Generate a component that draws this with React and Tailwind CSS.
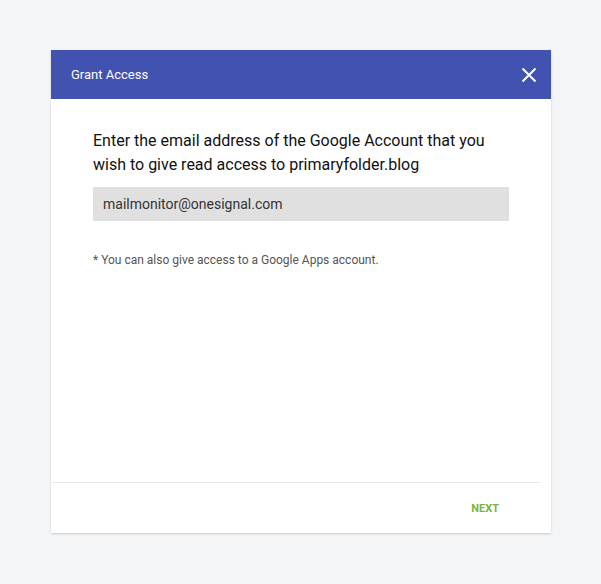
import React from 'react';

export default function App() {
  return (
    <div className="min-h-[584px] bg-[#f4f5f7] pt-[50px] pl-[51px]" style={{ fontFamily: 'Roboto, "Liberation Sans", sans-serif' }}>
      <div className="w-[500px] bg-white shadow-[0_1px_2px_rgba(0,0,0,0.18)] flex flex-col">
        <div className="h-[49px] bg-[#4152b1] flex items-center justify-between pl-[20px] pr-[14px]">
          <span className="text-white text-[13px]">Grant Access</span>
          <svg width="16" height="16" viewBox="0 0 16 16" className="text-white">
            <path d="M1.5 1.5L14.5 14.5M14.5 1.5L1.5 14.5" stroke="currentColor" strokeWidth="2" />
          </svg>
        </div>
        <div className="h-[383px] px-[42px] pt-[30px]">
          <p className="w-[416px] text-[16px] leading-[24px] text-[#111]">
            Enter the email address of the Google Account that you wish to give read access to primaryfolder.blog
          </p>
          <div className="mt-[10px] h-[34px] w-[416px] bg-[#e0e0e0] flex items-center px-[10px] text-[14px] text-[#333]">
            mailmonitor@onesignal.com
          </div>
          <p className="mt-[31px] text-[12px] leading-[16px] text-[#555]">
            * You can also give access to a Google Apps account.
          </p>
        </div>
        <div className="h-px bg-[#e8e8e8] mr-[10px]" />
        <div className="h-[50px] flex items-center justify-end pr-[52px] pt-[2px]">
          <button className="text-[11px] font-bold text-[#7cb342]">NEXT</button>
        </div>
      </div>
    </div>
  );
}
